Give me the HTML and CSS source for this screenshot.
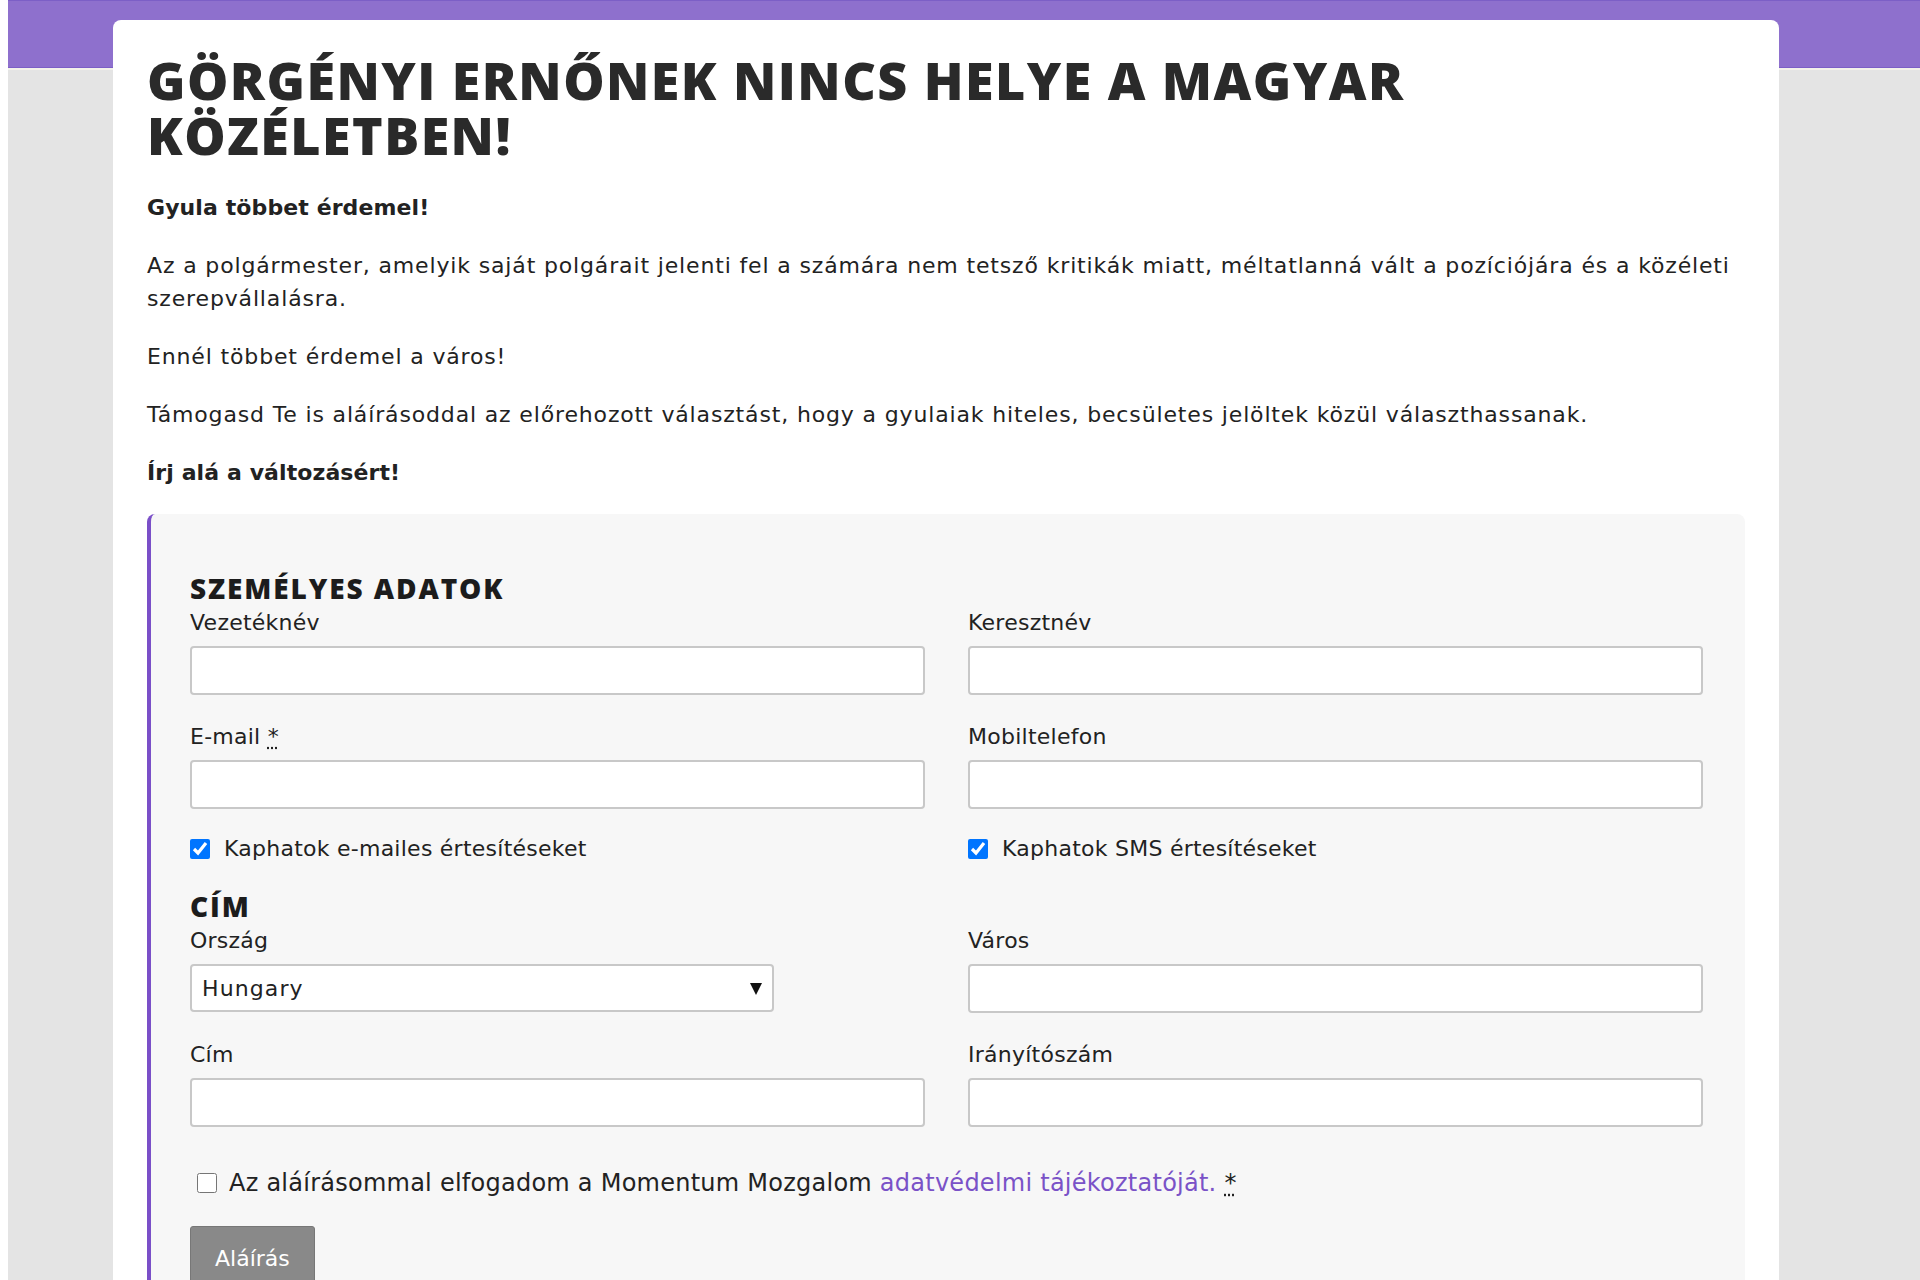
FILE: index.html
```html
<!DOCTYPE html>
<html lang="hu">
<head>
<meta charset="utf-8">
<title>Görgényi Ernőnek nincs helye a magyar közéletben!</title>
<link rel="stylesheet" href="styles.css">
</head>
<body>
<div class="page">
  <main class="card">
    <h1 class="title">GÖRGÉNYI ERNŐNEK NINCS HELYE A MAGYAR KÖZÉLETBEN!</h1>
    <p class="text text-strong">Gyula többet érdemel!</p>
    <p class="text">Az a polgármester, amelyik saját polgárait jelenti fel a számára nem tetsző kritikák miatt, méltatlanná vált a pozíciójára és a közéleti szerepvállalásra.</p>
    <p class="text">Ennél többet érdemel a város!</p>
    <p class="text">Támogasd Te is aláírásoddal az előrehozott választást, hogy a gyulaiak hiteles, becsületes jelöltek közül választhassanak.</p>
    <p class="text text-strong">Írj alá a változásért!</p>

    <form class="panel">
      <h2 class="section">SZEMÉLYES ADATOK</h2>
      <div class="grid">
        <div class="field">
          <label class="label" for="lastname">Vezetéknév</label>
          <input class="input" id="lastname" type="text">
        </div>
        <div class="field">
          <label class="label" for="firstname">Keresztnév</label>
          <input class="input" id="firstname" type="text">
        </div>
        <div class="field">
          <label class="label" for="email">E-mail <abbr class="req" title="kötelező">*</abbr></label>
          <input class="input" id="email" type="email">
        </div>
        <div class="field">
          <label class="label" for="phone">Mobiltelefon</label>
          <input class="input" id="phone" type="tel">
        </div>
        <label class="check"><input class="box" type="checkbox" checked><span>Kaphatok e-mailes értesítéseket</span></label>
        <label class="check"><input class="box" type="checkbox" checked><span>Kaphatok SMS értesítéseket</span></label>
      </div>

      <h2 class="section section-addr">CÍM</h2>
      <div class="grid">
        <div class="field">
          <label class="label" for="country">Ország</label>
          <div class="select-wrap">
            <select class="select" id="country"><option>Hungary</option></select>
          </div>
        </div>
        <div class="field">
          <label class="label" for="city">Város</label>
          <input class="input" id="city" type="text">
        </div>
        <div class="field">
          <label class="label" for="address">Cím</label>
          <input class="input" id="address" type="text">
        </div>
        <div class="field">
          <label class="label" for="zip">Irányítószám</label>
          <input class="input" id="zip" type="text">
        </div>
      </div>

      <label class="consent"><input class="box" type="checkbox"><span>Az aláírásommal elfogadom a Momentum Mozgalom <a class="link" href="#">adatvédelmi tájékoztatóját.</a> <abbr class="req" title="kötelező">*</abbr></span></label>

      <button class="submit" type="button">Aláírás</button>
    </form>
  </main>
</div>
</body>
</html>
```

FILE: styles.css
```css
html, body {
  margin: 0;
  padding: 0;
  background: #ffffff;
}

body {
  font-family: "DejaVu Sans", "Open Sans", "Liberation Sans", sans-serif;
  color: #222222;
  overflow: hidden;
}

.page {
  margin-left: 8px;
  min-height: 1280px;
  padding-top: 20px;
  box-sizing: border-box;
  background:
    linear-gradient(to bottom,
      #7c5fc6 0, #7c5fc6 1px,
      #8e70cd 1px, #8e70cd 67px,
      #7c5fc6 67px, #7c5fc6 68px,
      #f3f2ea 68px, #f3f2ea 70px,
      #e4e4e4 70px, #e4e4e4 100%);
}

.card {
  margin-left: 105px;
  width: 1666px;
  box-sizing: border-box;
  min-height: 1260px;
  padding: 32px 34px 40px 34px;
  background: #ffffff;
  border-radius: 8px 8px 0 0;
}

.title {
  margin: 0 0 28px;
  font-family: "Open Sans", "Noto Sans", sans-serif;
  font-size: 52px;
  line-height: 55px;
  font-weight: 800;
  letter-spacing: 1.45px;
  color: #2a2a2a;
}

.text {
  margin: 0 0 25px;
  font-size: 22px;
  line-height: 33px;
  letter-spacing: 0.85px;
  color: #222222;
}

.text:first-of-type {
  padding-top: 1px;
}

.text-strong {
  font-weight: 700;
  letter-spacing: 0.1px;
}

.panel {
  margin-top: 25px;
  padding: 58px 42px 40px 39px;
  background: #f7f7f7;
  border-left: 4px solid #7a4fc8;
  border-radius: 8px 8px 0 0;
}

.section {
  margin: 0 0 5px;
  font-family: "Open Sans", "Noto Sans", sans-serif;
  font-size: 28px;
  line-height: 32px;
  font-weight: 800;
  letter-spacing: 1.9px;
  color: #1c1c1c;
}

.section-addr {
  margin-top: 28px;
  margin-bottom: 5px;
}

.grid {
  display: grid;
  grid-template-columns: 1fr 1fr;
  column-gap: 43px;
}

.field {
  margin-bottom: 28px;
}

.label {
  display: block;
  margin-bottom: 10px;
  padding-top: 1px;
  font-size: 22px;
  line-height: 26px;
  letter-spacing: 0.25px;
  color: #222222;
}

.req {
  text-decoration: underline dotted;
  text-underline-offset: 3px;
  cursor: help;
}

.input {
  display: block;
  width: 100%;
  height: 49px;
  box-sizing: border-box;
  border: 2px solid #c8c8c8;
  border-radius: 4px;
  background: #ffffff;
  font-family: inherit;
  font-size: 22px;
  padding: 0 10px;
  outline: none;
}

.check {
  display: flex;
  align-items: center;
  margin-top: -2px;
  font-size: 22px;
  line-height: 27px;
  letter-spacing: 0.25px;
  color: #222222;
}

.box {
  width: 20px;
  height: 20px;
  margin: 0 14px 0 0;
  flex: none;
}

.select-wrap {
  position: relative;
  width: 584px;
}

.select-wrap::after {
  content: "";
  position: absolute;
  right: 12px;
  top: 50%;
  margin-top: -5px;
  border-left: 6.5px solid transparent;
  border-right: 6.5px solid transparent;
  border-top: 12px solid #111111;
  pointer-events: none;
}

.select {
  display: block;
  width: 100%;
  height: 48px;
  box-sizing: border-box;
  -webkit-appearance: none;
  appearance: none;
  border: 2px solid #c8c8c8;
  border-radius: 4px;
  background: #ffffff;
  padding: 0 40px 0 10px;
  font-family: inherit;
  font-size: 22px;
  letter-spacing: 1.1px;
  color: #222222;
  outline: none;
}

.consent {
  display: flex;
  align-items: center;
  margin-top: 13px;
  padding-left: 7px;
  font-size: 24px;
  line-height: 30px;
  letter-spacing: 0.25px;
  color: #222222;
}

.consent .box {
  margin-right: 12px;
}

.link {
  color: #7a52c7;
  text-decoration: none;
}

.submit {
  display: block;
  margin-top: 28px;
  padding: 18px 24px 18px 24px;
  background: #898989;
  border: 1px solid #777777;
  border-radius: 3px;
  color: #ffffff;
  font-family: inherit;
  font-size: 22px;
  line-height: 27px;
  letter-spacing: 0;
  cursor: pointer;
}
```
